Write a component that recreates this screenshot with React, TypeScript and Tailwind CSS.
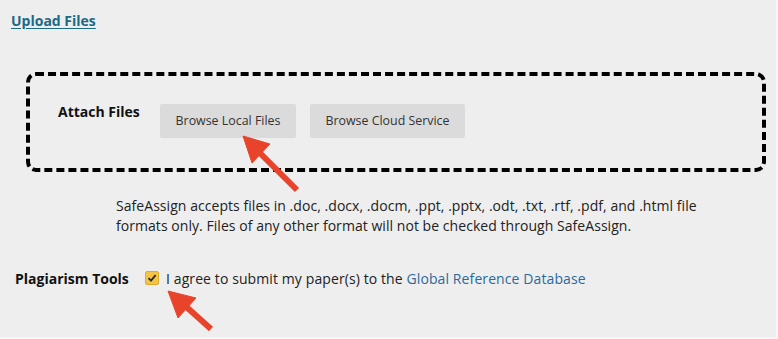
import React from "react";

function Arrows() {
  return (
    <svg
      className="absolute left-0 top-0 pointer-events-none"
      width="776"
      height="337"
      viewBox="0 0 776 337"
    >
      <g fill="#e8442b" stroke="#e8442b">
        <line x1="256" y1="149" x2="297" y2="190" strokeWidth="6" />
        <polygon points="243,136 270,144 252,163" strokeWidth="1" strokeLinejoin="round" />
        <line x1="182" y1="303" x2="211" y2="329" strokeWidth="6" />
        <polygon points="168,291 196,298 178,318" strokeWidth="1" strokeLinejoin="round" />
      </g>
    </svg>
  );
}

export default function App() {
  return (
    <div className="w-[778px] h-[339px] bg-[#f7f7f7]">
      <div
        className="relative w-[776px] h-[337px] bg-[#eeeeee] pt-[11px] pl-[11px] text-[#222]"
        style={{ fontFamily: '"Open Sans", "Noto Sans", sans-serif' }}
      >
        <a
          href="#"
          className="block w-fit text-[14px] leading-5 font-bold text-[#1b6a86] underline underline-offset-2"
        >
          Upload Files
        </a>

        <div className="mt-[41px] ml-[15px] w-[740px] h-[100px] border-4 border-dashed border-black rounded-[10px] pt-[28px] pl-[28px]">
          <div className="flex items-start">
            <div className="w-[102px] -mt-0.5 text-[14px] leading-5 font-bold text-[#111]">
              Attach Files
            </div>
            <div className="flex gap-[14px]">
              <button className="h-[34px] w-[136px] bg-[#dbdbdb] rounded-[2px] text-[12.4px] text-[#333]">
                Browse Local Files
              </button>
              <button className="h-[34px] w-[155px] bg-[#dbdbdb] rounded-[2px] text-[12.4px] text-[#333]">
                Browse Cloud Service
              </button>
            </div>
          </div>
        </div>

        <p className="mt-[24px] ml-[105px] w-[600px] text-[14px] leading-5 tracking-[0.05px] text-[#222]">
          SafeAssign accepts files in .doc, .docx, .docm, .ppt, .pptx, .odt, .txt, .rtf, .pdf, and .html file
          formats only. Files of any other format will not be checked through SafeAssign.
        </p>

        <div className="mt-[32px] ml-[4px] flex items-center h-5">
          <div className="w-[130px] text-[14px] font-bold text-[#111]">Plagiarism Tools</div>
          <span className="flex items-center justify-center w-[14px] h-[14px] rounded-[2px] bg-[#f6c445] border border-[#e0aa2a]">
            <svg width="10" height="10" viewBox="0 0 10 10">
              <path d="M1.5 5.2 L4 7.6 L8.6 2.2" fill="none" stroke="#1f2a3a" strokeWidth="1.8" />
            </svg>
          </span>
          <span className="ml-[7px] text-[14px] tracking-[0.1px] text-[#222]">
            I agree to submit my paper(s) to the{" "}
            <a href="#" className="text-[#2b6a9b]">
              Global Reference Database
            </a>
          </span>
        </div>

        <Arrows />
      </div>
    </div>
  );
}
